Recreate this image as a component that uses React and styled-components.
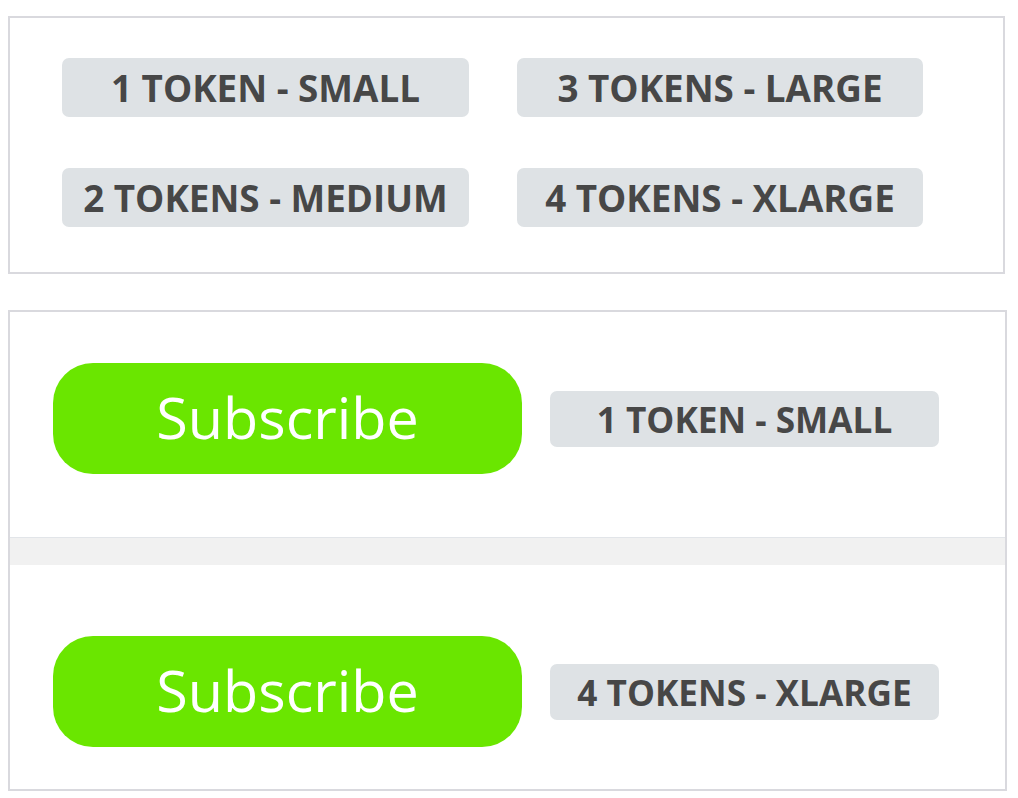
import styled, { createGlobalStyle } from "styled-components"

const GlobalStyle = createGlobalStyle`
  body {
    margin: 0;
    background: #ffffff;
    font-family: 'Open Sans', 'Noto Sans', sans-serif;
  }
`

const Page = styled.div`
  display: flex;
  flex-direction: column;
  gap: 36px;
  padding: 16px 0 0 8px;
`

const SizesPanel = styled.section`
  box-sizing: border-box;
  width: 997px;
  border: 2px solid #d9d9de;
  padding: 40px 0 45px 52px;
  display: grid;
  grid-template-columns: 407px 406px;
  column-gap: 48px;
  row-gap: 51px;
`

const Badge = styled.div`
  box-sizing: border-box;
  display: flex;
  align-items: center;
  justify-content: center;
  width: ${(p) => (p.$small ? "389px" : "100%")};
  height: ${(p) => (p.$small ? "56px" : "59px")};
  background: #dee2e5;
  border-radius: 7px;
  color: #474747;
  font-family: 'Open Sans', sans-serif;
  font-weight: 700;
  font-size: ${(p) => (p.$small ? "35.2px" : "36.8px")};
  text-transform: uppercase;
  white-space: nowrap;
`

const ButtonsPanel = styled.section`
  box-sizing: border-box;
  width: 999px;
  border: 2px solid #d9d9de;
`

const Row = styled.div`
  display: flex;
  align-items: center;
  gap: 28px;
  padding: ${(p) => p.$pad};
`

const Divider = styled.div`
  height: 27px;
  background: #f1f1f1;
  border-top: 1px solid #e2e5e9;
`

const Subscribe = styled.button`
  box-sizing: border-box;
  width: 469px;
  height: 111px;
  border: none;
  border-radius: 40px;
  background: #6ae600;
  color: #ffffff;
  font-family: 'Open Sans', sans-serif;
  font-weight: 400;
  font-size: 57.5px;
  padding: 0 0 4px;
  cursor: pointer;
`

const sizes = ["1 Token - Small", "3 Tokens - Large", "2 Tokens - Medium", "4 Tokens - XLarge"]

const App = () => {
  return (
    <>
      <GlobalStyle />
      <Page>
        <SizesPanel>
          {sizes.map((s) => (
            <Badge key={s}>{s}</Badge>
          ))}
        </SizesPanel>

        <ButtonsPanel>
          <Row $pad="51px 0 63px 43px">
            <Subscribe>Subscribe</Subscribe>
            <Badge $small>1 Token - Small</Badge>
          </Row>
          <Divider />
          <Row $pad="71px 0 42px 43px">
            <Subscribe>Subscribe</Subscribe>
            <Badge $small>4 Tokens - XLarge</Badge>
          </Row>
        </ButtonsPanel>
      </Page>
    </>
  )
}

export default App
